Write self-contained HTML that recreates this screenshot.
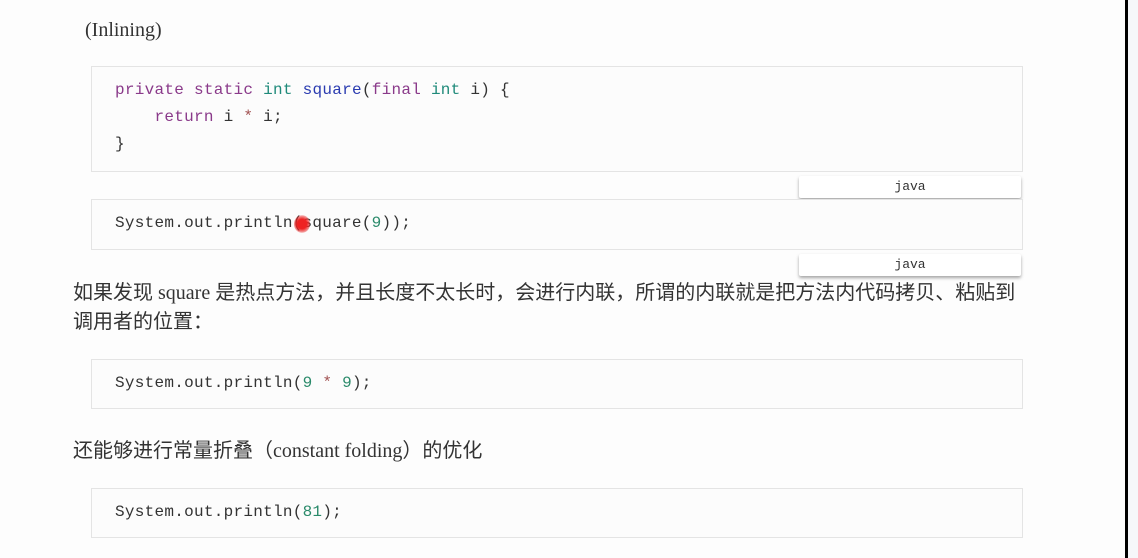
<!DOCTYPE html>
<html><head><meta charset="utf-8"><style>
body{margin:0;width:1138px;height:558px;background:#fdfdfd;position:relative;overflow:hidden;font-family:"Liberation Serif","Noto Sans CJK SC",serif;color:#333}
.box{position:absolute;left:91px;width:932px;border:1px solid #e4e4e4;background:#fcfcfc;font-family:"Liberation Mono",monospace;font-size:16px;letter-spacing:0.27px;color:#333;box-sizing:border-box}
.box pre{margin:0;font:inherit;position:absolute;left:23px;line-height:27px}
.k{color:#8a3a8a}.t{color:#1f8a7a}.f{color:#2a3bb0}.n{color:#2a8a6a}.o{color:#a05050}
.lab{position:absolute;left:799px;width:222px;height:22px;background:#fff;box-shadow:0 2px 3px rgba(0,0,0,.35);font-family:"Liberation Mono",monospace;font-size:13px;text-align:center;line-height:22px;color:#333;border-radius:2px}
.p{position:absolute;left:73px;font-family:"Liberation Serif","Noto Sans CJK SC",sans-serif;font-size:20px;line-height:29px;color:#333;width:1000px}
</style></head><body>
<div class="p" style="left:85px;top:16px">(Inlining)</div>
<div class="box" style="top:66px;height:106px"><pre style="top:10px"><span class="k">private</span> <span class="k">static</span> <span class="t">int</span> <span class="f">square</span>(<span class="k">final</span> <span class="t">int</span> i) {
    <span class="k">return</span> i <span class="o">*</span> i;
}</pre></div>
<div class="lab" style="top:176px">java</div>
<div class="box" style="top:199px;height:51px"><pre style="top:10px">System.out.println(square(<span class="n">9</span>));</pre></div>
<div style="position:absolute;left:294px;top:215px;width:16px;height:18px;border-radius:50%;background:radial-gradient(circle,#e22 40%,rgba(230,40,40,.4) 70%,transparent 75%)"></div>
<div class="lab" style="top:254px">java</div>
<div class="p" style="top:279px">如果发现 square 是热点方法，并且长度不太长时，会进行内联，所谓的内联就是把方法内代码拷贝、粘贴到<br>调用者的位置：</div>
<div class="box" style="top:359px;height:50px"><pre style="top:10px">System.out.println(<span class="n">9</span> <span class="o">*</span> <span class="n">9</span>);</pre></div>
<div class="p" style="top:437px">还能够进行常量折叠（constant folding）的优化</div>
<div class="box" style="top:488px;height:50px"><pre style="top:10px">System.out.println(<span class="n">81</span>);</pre></div>
<div style="position:absolute;left:1125px;top:0;width:3px;height:558px;background:#000"></div>
<div style="position:absolute;left:1128px;top:0;width:10px;height:558px;background:#f6f7fa"></div>
</body></html>
